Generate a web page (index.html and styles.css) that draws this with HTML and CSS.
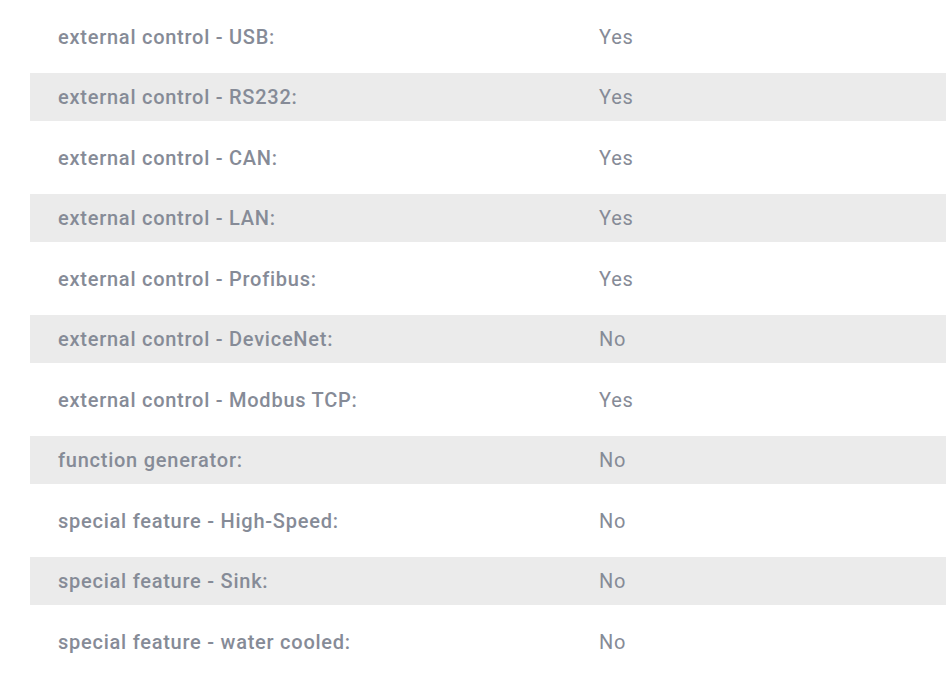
FILE: index.html
```html
<!DOCTYPE html>
<html>
<head>
<meta charset="utf-8">
<link rel="stylesheet" href="styles.css">
</head>
<body>
<div class="specs">
  <div class="row"><div class="label">external control - USB:</div><div class="value">Yes</div></div>
  <div class="row alt"><div class="label">external control - RS232:</div><div class="value">Yes</div></div>
  <div class="row"><div class="label">external control - CAN:</div><div class="value">Yes</div></div>
  <div class="row alt"><div class="label">external control - LAN:</div><div class="value">Yes</div></div>
  <div class="row"><div class="label">external control - Profibus:</div><div class="value">Yes</div></div>
  <div class="row alt"><div class="label">external control - DeviceNet:</div><div class="value">No</div></div>
  <div class="row"><div class="label">external control - Modbus TCP:</div><div class="value">Yes</div></div>
  <div class="row alt"><div class="label">function generator:</div><div class="value">No</div></div>
  <div class="row"><div class="label">special feature - High-Speed:</div><div class="value">No</div></div>
  <div class="row alt"><div class="label">special feature - Sink:</div><div class="value">No</div></div>
  <div class="row"><div class="label">special feature - water cooled:</div><div class="value">No</div></div>
</div>
</body>
</html>
```
FILE: styles.css
```css
html, body {
  margin: 0;
  padding: 0;
  background: #ffffff;
}
body {
  font-family: Roboto, "Liberation Sans", sans-serif;
  color: #868b97;
  overflow: hidden;
}
.specs {
  display: flex;
  flex-direction: column;
  gap: 12.5px;
  padding: 12.5px 0 0 30px;
}
.row {
  display: grid;
  grid-template-columns: 541px 1fr;
  align-items: center;
  height: 48px;
  padding-left: 28px;
  font-size: 20px;
  letter-spacing: 0.75px;
}
.row.alt {
  background: #ebebeb;
}
.label {
  font-weight: 500;
}
.value {
  font-weight: 400;
}
```
